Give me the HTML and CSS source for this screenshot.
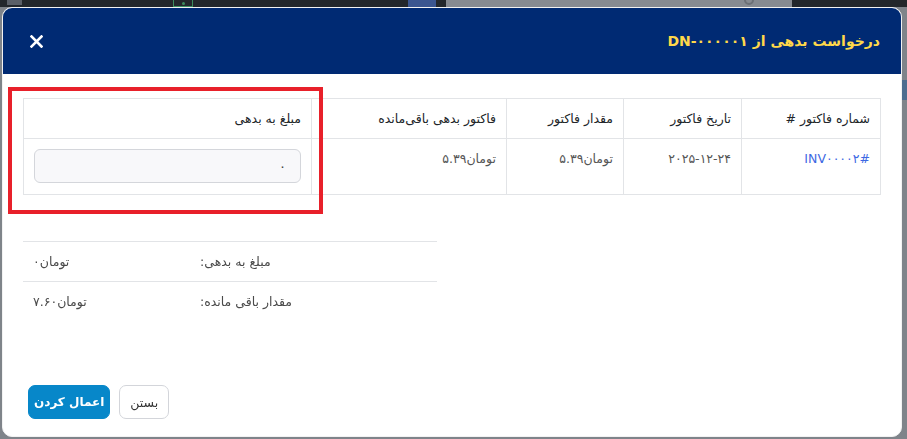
FILE: index.html
```html
<!DOCTYPE html>
<html lang="fa" dir="rtl">
<head>
    <meta charset="UTF-8">
    <meta name="viewport" content="width=device-width, initial-scale=1.0">
    <title>درخواست بدهی</title>
    <link rel="stylesheet" href="styles.css">
</head>
<body>
    <div class="topbar">
        <span class="tb-user"></span>
        <span class="tb-green"><i></i></span>
        <span class="tb-plus"></span>
        <span class="tb-search"><i></i></span>
    </div>
    <div class="page-side"></div>

    <div class="modal">
        <div class="modal-header">
            <h4 class="modal-title">درخواست بدهی از DN-۰۰۰۰۰۱</h4>
            <button class="btn-close" aria-label="close">
                <svg width="13" height="13" viewBox="0 0 13 13"><path d="M1.5 1.5 L11.5 11.5 M11.5 1.5 L1.5 11.5" stroke="#fff" stroke-width="2.6" stroke-linecap="square"/></svg>
            </button>
        </div>

        <div class="modal-body">
            <table class="table invoices">
                <thead>
                    <tr>
                        <th class="c-num">شماره فاکتور #</th>
                        <th class="c-date">تاریخ فاکتور</th>
                        <th class="c-amount">مقدار فاکتور</th>
                        <th class="c-left">فاکتور بدهی باقی‌مانده</th>
                        <th class="c-debit">مبلغ به بدهی</th>
                    </tr>
                </thead>
                <tbody>
                    <tr>
                        <td><a href="#">#INV۰۰۰۰۲</a></td>
                        <td>۲۰۲۵-۱۲-۲۴</td>
                        <td>تومان۵.۳۹</td>
                        <td>تومان۵.۳۹</td>
                        <td><input type="text" class="form-control" value="۰"></td>
                    </tr>
                </tbody>
            </table>

            <table class="table totals">
                <tr>
                    <td class="t-label">مبلغ به بدهی:</td>
                    <td class="t-value">تومان۰</td>
                </tr>
                <tr>
                    <td class="t-label">مقدار باقی مانده:</td>
                    <td class="t-value">تومان۷.۶۰</td>
                </tr>
            </table>
        </div>

        <div class="modal-footer">
            <button class="btn btn-default">بستن</button>
            <button class="btn btn-primary">اعمال کردن</button>
        </div>

        <div class="highlight"></div>
    </div>
</body>
</html>
```

FILE: styles.css
```css
* {
    box-sizing: border-box;
}
body {
    margin: 0;
    height: 439px;
    overflow: hidden;
    background: #7f848a;
    font-family: "DejaVu Sans", sans-serif;
    font-size: 12.5px;
    color: #333;
}
.topbar {
    height: 7px;
    background: #23272b;
    display: flex;
    direction: ltr;
    overflow: hidden;
}
.tb-user {
    width: 15px;
    height: 5px;
    margin-left: 7px;
    background: #5b6068;
}
.tb-green {
    width: 20px;
    height: 7px;
    margin-left: 151px;
    border: 1px solid #3c8d5e;
    border-top: none;
    display: flex;
    justify-content: center;
}
.tb-green i {
    width: 3px;
    height: 3px;
    margin-top: 2px;
    border-radius: 50%;
    background: #3c8d5e;
}
.tb-plus {
    width: 28px;
    margin-left: 215px;
    background: #3b5690;
}
.tb-search {
    width: 346px;
    margin-left: 10px;
    background: #878b91;
    display: flex;
    justify-content: flex-end;
    padding-right: 38px;
}
.tb-search i {
    width: 10px;
    height: 10px;
    margin-top: -5px;
    border: 2px solid #6c7076;
    border-radius: 50%;
}
.page-side {
    position: absolute;
    top: 80px;
    right: 0;
    width: 5px;
    height: 20px;
    background: #4d6c8f;
}

.modal {
    position: fixed;
    top: 7px;
    left: 2px;
    width: 900px;
    height: 430px;
    background: #fff;
    border: 1px solid #f2f2f2;
    border-radius: 10px;
    display: flex;
    flex-direction: column;
}
.modal-header {
    height: 66px;
    flex: none;
    background: #002a73;
    border-radius: 9px 9px 0 0;
    display: flex;
    align-items: center;
    justify-content: space-between;
    padding: 0 21px 0 27px;
}
.modal-title {
    margin: 0;
    font-size: 14px;
    font-weight: bold;
    color: #ffd84a;
}
.btn-close {
    background: none;
    border: none;
    padding: 0;
    margin-top: 1px;
    display: flex;
    cursor: pointer;
}

.modal-body {
    padding: 24px 20px 0 20px;
}
.table {
    border-collapse: collapse;
}
.invoices {
    width: 858px;
    border: 1px solid #e2e4e7;
}
.invoices th,
.invoices td {
    border: 1px solid #e2e4e7;
    padding: 10px 10px 9px;
    text-align: right;
    vertical-align: top;
    line-height: 20px;
}
.invoices th {
    font-weight: normal;
    color: #212529;
}
.invoices td {
    color: #555;
    height: 56px;
}
.invoices a {
    color: #3d68e3;
    text-decoration: none;
}
.c-num { width: 139px; }
.c-date { width: 118px; }
.c-amount { width: 117px; }
.c-left { width: 195px; }
.invoices td:last-child {
    padding: 10px;
}
.form-control {
    display: block;
    width: 100%;
    height: 34px;
    border: 1px solid #d4d6db;
    border-radius: 6px;
    background: #f8f8fa;
    padding: 0 14px;
    font-family: inherit;
    font-size: 13px;
    color: #444;
    text-align: right;
}

.totals {
    width: 414px;
    margin-top: 46px;
    margin-right: auto;
}
.totals td {
    border-top: 1px solid #e2e4e7;
    height: 40px;
    padding: 0 10px;
    text-align: left;
    color: #4a4a4a;
}
.t-label { width: 247px; }

.modal-footer {
    margin-top: auto;
    padding: 0 25px 17px;
    display: flex;
    justify-content: flex-end;
    gap: 9px;
}
.btn {
    height: 34px;
    border-radius: 7px;
    font-family: inherit;
    font-size: 12.5px;
    cursor: pointer;
}
.btn-default {
    padding: 0 10px;
    background: #fff;
    border: 1px solid #d3d5da;
    color: #333;
}
.btn-primary {
    padding: 0 5px;
    font-size: 12px;
    background: #0787c9;
    border: 1px solid #0787c9;
    color: #fff;
    font-weight: bold;
}

.highlight {
    position: absolute;
    left: 5px;
    top: 79px;
    width: 315px;
    height: 127px;
    border: 4px solid #e8202a;
    pointer-events: none;
}
```
